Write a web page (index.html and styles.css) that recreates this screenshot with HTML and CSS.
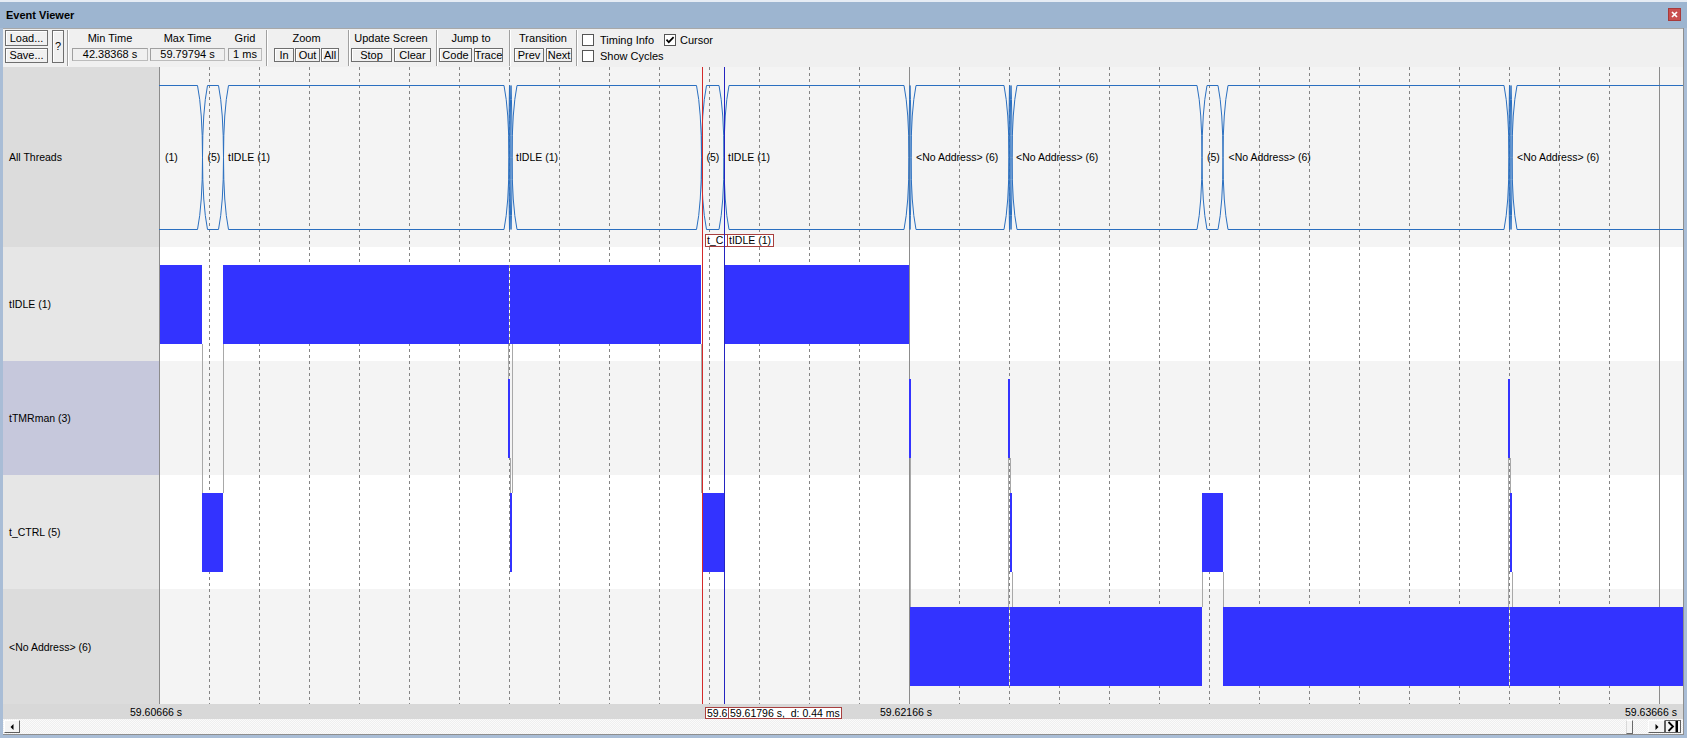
FILE: index.html
```html
<!DOCTYPE html>
<html>
<head>
<meta charset="utf-8">
<title>Event Viewer</title>
<link rel="stylesheet" href="styles.css">
</head>
<body>
<div class="window">
  <div class="titlebar">
    <span class="title">Event Viewer</span>
    <span class="close"><svg width="11" height="11" viewBox="0 0 11 11"><path class="close-x" d="M3 3L8 8M8 3L3 8"/></svg></span>
  </div>
  <div class="content">
    <div class="toolbar">
      <div class="filebtns">
        <button class="btn load">Load...</button>
        <button class="btn save">Save...</button>
      </div>
      <button class="btn help">?</button>
      <div class="sep ml3"></div>
      <div class="times ml3">
        <div class="field w-min"><div class="glabel">Min Time</div><div class="val">42.38368 s</div></div>
        <div class="field w-max"><div class="glabel">Max Time</div><div class="val">59.79794 s</div></div>
        <div class="field w-grid"><div class="glabel">Grid</div><div class="val">1 ms</div></div>
      </div>
      <div class="sep ml4"></div>
      <div class="group ml6">
        <div class="glabel">Zoom</div>
        <div class="brow tight">
          <button class="btn w20">In</button>
          <button class="btn w25">Out</button>
          <button class="btn w18">All</button>
        </div>
      </div>
      <div class="sep ml9"></div>
      <div class="group ml1">
        <div class="glabel">Update Screen</div>
        <div class="brow">
          <button class="btn w41">Stop</button>
          <button class="btn w37">Clear</button>
        </div>
      </div>
      <div class="sep ml5"></div>
      <div class="group ml1">
        <div class="glabel">Jump to</div>
        <div class="brow">
          <button class="btn w33">Code</button>
          <button class="btn w29">Trace</button>
        </div>
      </div>
      <div class="sep ml6"></div>
      <div class="group ml3">
        <div class="glabel">Transition</div>
        <div class="brow">
          <button class="btn w30">Prev</button>
          <button class="btn w26">Next</button>
        </div>
      </div>
      <div class="sep ml4"></div>
      <div class="checks">
        <div class="chkrow">
          <label class="chk chk-timing"><span class="cb"></span><span class="cbtext">Timing Info</span></label>
          <label class="chk chk-cursor"><span class="cb"><svg width="10" height="10" viewBox="0 0 10 10"><path class="tick" d="M1.5 4.6L3.8 7.2L8.6 2.2"/></svg></span><span class="cbtext">Cursor</span></label>
        </div>
        <div class="chkrow">
          <label class="chk"><span class="cb"></span><span class="cbtext">Show Cycles</span></label>
        </div>
      </div>
    </div>

    <div class="chart">
      <div class="labels">
        <div class="lab lab-a h180">All Threads</div>
        <div class="lab lab-b h114">tIDLE (1)</div>
        <div class="lab lab-sel h114">tTMRman (3)</div>
        <div class="lab lab-b h114">t_CTRL (5)</div>
        <div class="lab lab-a h115">&lt;No Address&gt; (6)</div>
      </div>
      <svg class="plot" width="1524" height="637" viewBox="0 0 1524 637">
        <rect class="bg-a" x="0" y="0" width="1524" height="180"/>
        <rect class="bg-b" x="0" y="180" width="1524" height="114"/>
        <rect class="bg-a" x="0" y="294" width="1524" height="114"/>
        <rect class="bg-b" x="0" y="408" width="1524" height="114"/>
        <rect class="bg-a" x="0" y="522" width="1524" height="115"/>

        <path class="gd" d="M50.5 0V637M100.5 0V637M150.5 0V637M200.5 0V637M250.5 0V637M300.5 0V637M350.5 0V637M400.5 0V637M450.5 0V637M500.5 0V637M550.5 0V637M600.5 0V637M650.5 0V637M700.5 0V637M800.5 0V637M850.5 0V637M900.5 0V637M950.5 0V637M1000.5 0V637M1050.5 0V637M1100.5 0V637M1150.5 0V637M1200.5 0V637M1250.5 0V637M1300.5 0V637M1350.5 0V637M1400.5 0V637M1450.5 0V637"/>
        <path class="gs" d="M0.5 0V637M750.5 0V637M1500.5 0V637"/>

        <path class="conn" d="M43.5 277V426M64.5 277V426M349.5 277V312M351.5 391V426M353.5 277V426M542.5 277V426M751.5 391V540M849.5 391V540M851.5 391V426M853.5 505V540M1043.5 505V540M1064.5 505V540M1349.5 391V540M1351.5 391V426M1353.5 505V540"/>

        <rect class="bar" x="1" y="198" width="42" height="79"/>
        <rect class="bar" x="64" y="198" width="286" height="79"/>
        <rect class="bar" x="351" y="198" width="191" height="79"/>
        <rect class="bar" x="565" y="198" width="185" height="79"/>

        <rect class="bar" x="349" y="312" width="2" height="79"/>
        <rect class="bar" x="750" y="312" width="2" height="79"/>
        <rect class="bar" x="849" y="312" width="2" height="79"/>
        <rect class="bar" x="1349" y="312" width="2" height="79"/>

        <rect class="bar" x="43" y="426" width="21" height="79"/>
        <rect class="bar" x="351" y="426" width="2" height="79"/>
        <rect class="bar" x="543" y="426" width="22" height="79"/>
        <rect class="bar" x="851" y="426" width="2" height="79"/>
        <rect class="bar" x="1043" y="426" width="21" height="79"/>
        <rect class="bar" x="1351" y="426" width="2" height="79"/>

        <rect class="bar" x="751" y="540" width="99" height="79"/>
        <rect class="bar" x="851" y="540" width="192" height="79"/>
        <rect class="bar" x="1064" y="540" width="286" height="79"/>
        <rect class="bar" x="1351" y="540" width="173" height="79"/>

        <path class="wave" d="M-20,90.5 Q-20,43.5 -15,18.5 H38.5 Q43.5,43.5 43.5,90.5 Q43.5,137.5 38.5,162.5 H-15 Q-20,137.5 -20,90.5Z"/>
        <path class="wave" d="M43.5,90.5 Q43.5,43.5 48.5,18.5 H59.5 Q64.5,43.5 64.5,90.5 Q64.5,137.5 59.5,162.5 H48.5 Q43.5,137.5 43.5,90.5Z"/>
        <path class="wave" d="M64.5,90.5 Q64.5,43.5 69.5,18.5 H345 Q350,43.5 350,90.5 Q350,137.5 345,162.5 H69.5 Q64.5,137.5 64.5,90.5Z"/>
        <path class="wave" d="M350,90.5 Q350,43.5 350.5,18.5 H350.5 Q351,43.5 351,90.5 Q351,137.5 350.5,162.5 H350.5 Q350,137.5 350,90.5Z"/>
        <path class="wave" d="M351,90.5 Q351,43.5 352,18.5 H352 Q353,43.5 353,90.5 Q353,137.5 352,162.5 H352 Q351,137.5 351,90.5Z"/>
        <path class="wave" d="M353,90.5 Q353,43.5 358,18.5 H537.5 Q542.5,43.5 542.5,90.5 Q542.5,137.5 537.5,162.5 H358 Q353,137.5 353,90.5Z"/>
        <path class="wave" d="M542.5,90.5 Q542.5,43.5 547.5,18.5 H560 Q565,43.5 565,90.5 Q565,137.5 560,162.5 H547.5 Q542.5,137.5 542.5,90.5Z"/>
        <path class="wave" d="M565,90.5 Q565,43.5 570,18.5 H745 Q750,43.5 750,90.5 Q750,137.5 745,162.5 H570 Q565,137.5 565,90.5Z"/>
        <path class="wave" d="M750,90.5 Q750,43.5 751,18.5 H751 Q752,43.5 752,90.5 Q752,137.5 751,162.5 H751 Q750,137.5 750,90.5Z"/>
        <path class="wave" d="M752,90.5 Q752,43.5 757,18.5 H845 Q850,43.5 850,90.5 Q850,137.5 845,162.5 H757 Q752,137.5 752,90.5Z"/>
        <path class="wave" d="M850,90.5 Q850,43.5 850.5,18.5 H850.5 Q851,43.5 851,90.5 Q851,137.5 850.5,162.5 H850.5 Q850,137.5 850,90.5Z"/>
        <path class="wave" d="M851,90.5 Q851,43.5 852,18.5 H852 Q853,43.5 853,90.5 Q853,137.5 852,162.5 H852 Q851,137.5 851,90.5Z"/>
        <path class="wave" d="M853,90.5 Q853,43.5 858,18.5 H1038 Q1043,43.5 1043,90.5 Q1043,137.5 1038,162.5 H858 Q853,137.5 853,90.5Z"/>
        <path class="wave" d="M1043,90.5 Q1043,43.5 1048,18.5 H1059 Q1064,43.5 1064,90.5 Q1064,137.5 1059,162.5 H1048 Q1043,137.5 1043,90.5Z"/>
        <path class="wave" d="M1064,90.5 Q1064,43.5 1069,18.5 H1345 Q1350,43.5 1350,90.5 Q1350,137.5 1345,162.5 H1069 Q1064,137.5 1064,90.5Z"/>
        <path class="wave" d="M1350,90.5 Q1350,43.5 1350.5,18.5 H1350.5 Q1351,43.5 1351,90.5 Q1351,137.5 1350.5,162.5 H1350.5 Q1350,137.5 1350,90.5Z"/>
        <path class="wave" d="M1351,90.5 Q1351,43.5 1352,18.5 H1352 Q1353,43.5 1353,90.5 Q1353,137.5 1352,162.5 H1352 Q1351,137.5 1351,90.5Z"/>
        <path class="wave" d="M1353,90.5 Q1353,43.5 1358,18.5 H1555 Q1560,43.5 1560,90.5 Q1560,137.5 1555,162.5 H1358 Q1353,137.5 1353,90.5Z"/>

        <text class="wl" x="6" y="94">(1)</text>
        <text class="wl" x="48.5" y="94">(5)</text>
        <text class="wl" x="69" y="94">tIDLE (1)</text>
        <text class="wl" x="357" y="94">tIDLE (1)</text>
        <text class="wl" x="547.5" y="94">(5)</text>
        <text class="wl" x="569" y="94">tIDLE (1)</text>
        <text class="wl" x="757" y="94">&lt;No Address&gt; (6)</text>
        <text class="wl" x="857" y="94">&lt;No Address&gt; (6)</text>
        <text class="wl" x="1048" y="94">(5)</text>
        <text class="wl" x="1069.5" y="94">&lt;No Address&gt; (6)</text>
        <text class="wl" x="1358" y="94">&lt;No Address&gt; (6)</text>

        <rect class="cbox" x="546.5" y="167.5" width="23" height="12"/>
        <text class="wl" x="548" y="177">t_C</text>
        <rect class="cbox" x="568.5" y="167.5" width="46" height="12"/>
        <text class="wl" x="570" y="177">tIDLE (1)</text>

        <path class="cur-red" d="M543.5 0V637"/>
        <path class="cur-blue" d="M565.5 0V637"/>
      </svg>
    </div>

    <div class="axis">
      <span class="tl tl-c" style="left:153px">59.60666 s</span>
      <span class="tl tl-c" style="left:903px">59.62166 s</span>
      <span class="tl" style="left:1622px">59.63666 s</span>
      <span class="tbox" style="left:702px;width:24px">59.6</span>
      <span class="tbox" style="left:725px">59.61796 s,&nbsp; d: 0.44 ms</span>
    </div>

    <div class="scrollbar">
      <span class="sbtn s-left"><svg width="4" height="6" viewBox="0 0 4 6"><path class="arrow" d="M3.5 0L0.5 3L3.5 6Z"/></svg></span>
      <span class="strack"></span>
      <span class="sthumb"></span>
      <span class="sbtn s-right"><svg width="4" height="6" viewBox="0 0 4 6"><path class="arrow" d="M0.5 0L3.5 3L0.5 6Z"/></svg></span>
      <span class="sbtn s-end"><svg width="12" height="11" viewBox="0 0 12 11"><path class="endline" d="M1.5 1L6 5.5L1.5 10"/><rect class="endbar" x="8.5" y="0" width="2.5" height="11"/></svg></span>
    </div>
  </div>
</div>
</body>
</html>
```

FILE: styles.css
```css
html, body {
  margin: 0;
  padding: 0;
}
body {
  width: 1687px;
  height: 738px;
  overflow: hidden;
  font-family: "Liberation Sans", Arial, sans-serif;
  font-size: 11px;
  color: #000;
  background: #a7bcd5;
}
.window {
  width: 1687px;
  height: 738px;
  display: flex;
  flex-direction: column;
  background: #a9bdd6;
}

/* title bar */
.titlebar {
  height: 26px;
  border-top: 2px solid #e6ecf4;
  background: #9db5d0;
  display: flex;
  align-items: center;
  justify-content: space-between;
  padding: 0 6px;
  flex: none;
}
.title {
  font-weight: bold;
  font-size: 11px;
}
.close {
  width: 13px;
  height: 13px;
  box-sizing: border-box;
  background: #c94f4f;
  border: 1px solid #a83a3a;
  display: flex;
  align-items: center;
  justify-content: center;
  margin-top: -1px;
}
.close-x {
  stroke: #fff;
  stroke-width: 1.7;
  fill: none;
}

/* content frame */
.content {
  margin: 0 3px 3px 3px;
  border-right: 1px solid #8e8e8e;
  border-bottom: 1px solid #8e8e8e;
  background: #f0f0f0;
  display: flex;
  flex-direction: column;
  flex: 1;
  min-height: 0;
}

/* toolbar */
.toolbar {
  height: 38px;
  border-top: 1px solid #a8a8a8;
  display: flex;
  align-items: flex-start;
  padding-left: 2px;
  background: #f0f0f0;
  flex: none;
}
.btn {
  font: inherit;
  margin: 0;
  padding: 0;
  box-sizing: border-box;
  border: 1px solid #6e6e6e;
  background: #f0f0f0;
  box-shadow: inset 1px 1px 0 #fff;
  color: #000;
  display: flex;
  align-items: center;
  justify-content: center;
  line-height: 1;
  white-space: nowrap;
}
.filebtns {
  display: flex;
  flex-direction: column;
  width: 43px;
  margin-top: 1px;
}
.load { height: 16px; }
.save { height: 15px; margin-top: 2px; }
.help {
  width: 12px;
  height: 33px;
  margin: 1px 0 0 4px;
}
.sep {
  width: 0;
  height: 36px;
  margin-top: 1px;
  border-left: 1px solid #a0a0a0;
  border-right: 1px solid #fff;
}
.ml1 { margin-left: 1px; }
.ml3 { margin-left: 3px; }
.ml4 { margin-left: 4px; }
.ml5 { margin-left: 5px; }
.ml6 { margin-left: 6px; }
.ml9 { margin-left: 9px; }

.group {
  display: flex;
  flex-direction: column;
}
.glabel {
  height: 19px;
  line-height: 19px;
  text-align: center;
  white-space: nowrap;
}
.brow {
  display: flex;
  gap: 2px;
}
.brow.tight { gap: 1px; }
.brow .btn { height: 14px; }
.w18 { width: 18px; }
.w20 { width: 20px; }
.w25 { width: 25px; }
.w26 { width: 26px; }
.w29 { width: 29px; }
.w30 { width: 30px; }
.w33 { width: 33px; }
.w37 { width: 37px; }
.w41 { width: 41px; }

.times { display: flex; }
.field {
  display: flex;
  flex-direction: column;
}
.w-min { width: 76px; }
.w-max { width: 75px; margin-left: 2px; }
.w-grid { width: 34px; margin-left: 3px; }
.val {
  height: 13px;
  box-sizing: border-box;
  border: 1px solid #bcbcbc;
  border-top-color: #a0a0a0;
  border-left-color: #a0a0a0;
  text-align: center;
  line-height: 11px;
  white-space: nowrap;
}

.checks {
  display: flex;
  flex-direction: column;
  gap: 4px;
  padding-top: 5px;
  margin-left: 4px;
}
.chkrow {
  display: flex;
  align-items: center;
  height: 12px;
}
.chk {
  display: flex;
  align-items: center;
}
.chk-timing { width: 82px; }
.cb {
  width: 12px;
  height: 12px;
  box-sizing: border-box;
  border: 1px solid #555;
  background: #fff;
  display: flex;
  align-items: center;
  justify-content: center;
}
.tick {
  stroke: #000;
  stroke-width: 1.7;
  fill: none;
}
.cbtext {
  margin-left: 6px;
  line-height: 12px;
  white-space: nowrap;
}
.chk-cursor .cbtext { margin-left: 4px; }

/* chart */
.chart {
  display: flex;
  height: 637px;
  flex: none;
}
.labels {
  width: 156px;
  display: flex;
  flex-direction: column;
}
.lab {
  display: flex;
  align-items: center;
  padding-left: 6px;
  font-size: 10.5px;
  white-space: nowrap;
}
.lab-a { background: #dcdcdc; }
.lab-b { background: #e6e6e6; }
.lab-sel { background: #c6c8dc; }
.h180 { height: 180px; }
.h114 { height: 114px; }
.h115 { height: 115px; }
.plot {
  display: block;
  width: 1524px;
  height: 637px;
}
.bg-a { fill: #f4f4f4; }
.bg-b { fill: #ffffff; }
.gd {
  fill: none;
  stroke: #858585;
  stroke-width: 1;
  stroke-dasharray: 3 3;
  shape-rendering: crispEdges;
}
.gs {
  fill: none;
  stroke: #8c8c8c;
  stroke-width: 1;
  shape-rendering: crispEdges;
}
.conn {
  fill: none;
  stroke: #a8a8a8;
  stroke-width: 1;
  shape-rendering: crispEdges;
}
.bar {
  fill: #3333ff;
  shape-rendering: crispEdges;
}
.wave {
  fill: none;
  stroke: #2a6fc0;
  stroke-width: 1;
}
.wl {
  font-family: "Liberation Sans", Arial, sans-serif;
  font-size: 10.5px;
  fill: #000;
}
.cbox {
  fill: #fff;
  stroke: #a84040;
  stroke-width: 1;
  shape-rendering: crispEdges;
}
.cur-red {
  stroke: #d42a2a;
  stroke-width: 1;
  shape-rendering: crispEdges;
}
.cur-blue {
  stroke: #2424c0;
  stroke-width: 1;
  shape-rendering: crispEdges;
}

/* time axis */
.axis {
  position: relative;
  height: 15px;
  background: #d8d8d8;
  font-size: 10.5px;
  flex: none;
}
.tl {
  position: absolute;
  top: 2px;
  line-height: 13px;
  white-space: nowrap;
}
.tl-c { transform: translateX(-50%); }
.tbox {
  position: absolute;
  top: 3px;
  height: 12px;
  box-sizing: border-box;
  border: 1px solid #a84040;
  background: #fff;
  line-height: 10px;
  padding: 0 1px;
  white-space: nowrap;
  overflow: hidden;
}

/* scrollbar */
.scrollbar {
  height: 15px;
  display: flex;
  align-items: center;
  padding: 0 2px 0 1px;
  background: repeating-conic-gradient(#efefef 0 25%, #fbfbfb 0 50%) 0 0 / 2px 2px;
  flex: none;
}
.sbtn {
  box-sizing: border-box;
  height: 13px;
  width: 16px;
  background: #f4f4f4;
  border: 1px solid;
  border-color: #fff #5f5f5f #5f5f5f #fff;
  display: flex;
  align-items: center;
  justify-content: center;
}
.s-right { width: 17px; }
.s-end {
  width: 16px;
  border-color: #5f5f5f;
}
.strack { flex: 1; }
.sthumb {
  width: 7px;
  height: 14px;
  box-sizing: border-box;
  border: 1px solid;
  border-color: #fff #6a6a6a #6a6a6a #d8d8d8;
  background: #f4f4f4;
  margin-right: 15px;
}
.arrow { fill: #000; }
.endline {
  fill: none;
  stroke: #000;
  stroke-width: 1.8;
}
.endbar { fill: #000; }
```
